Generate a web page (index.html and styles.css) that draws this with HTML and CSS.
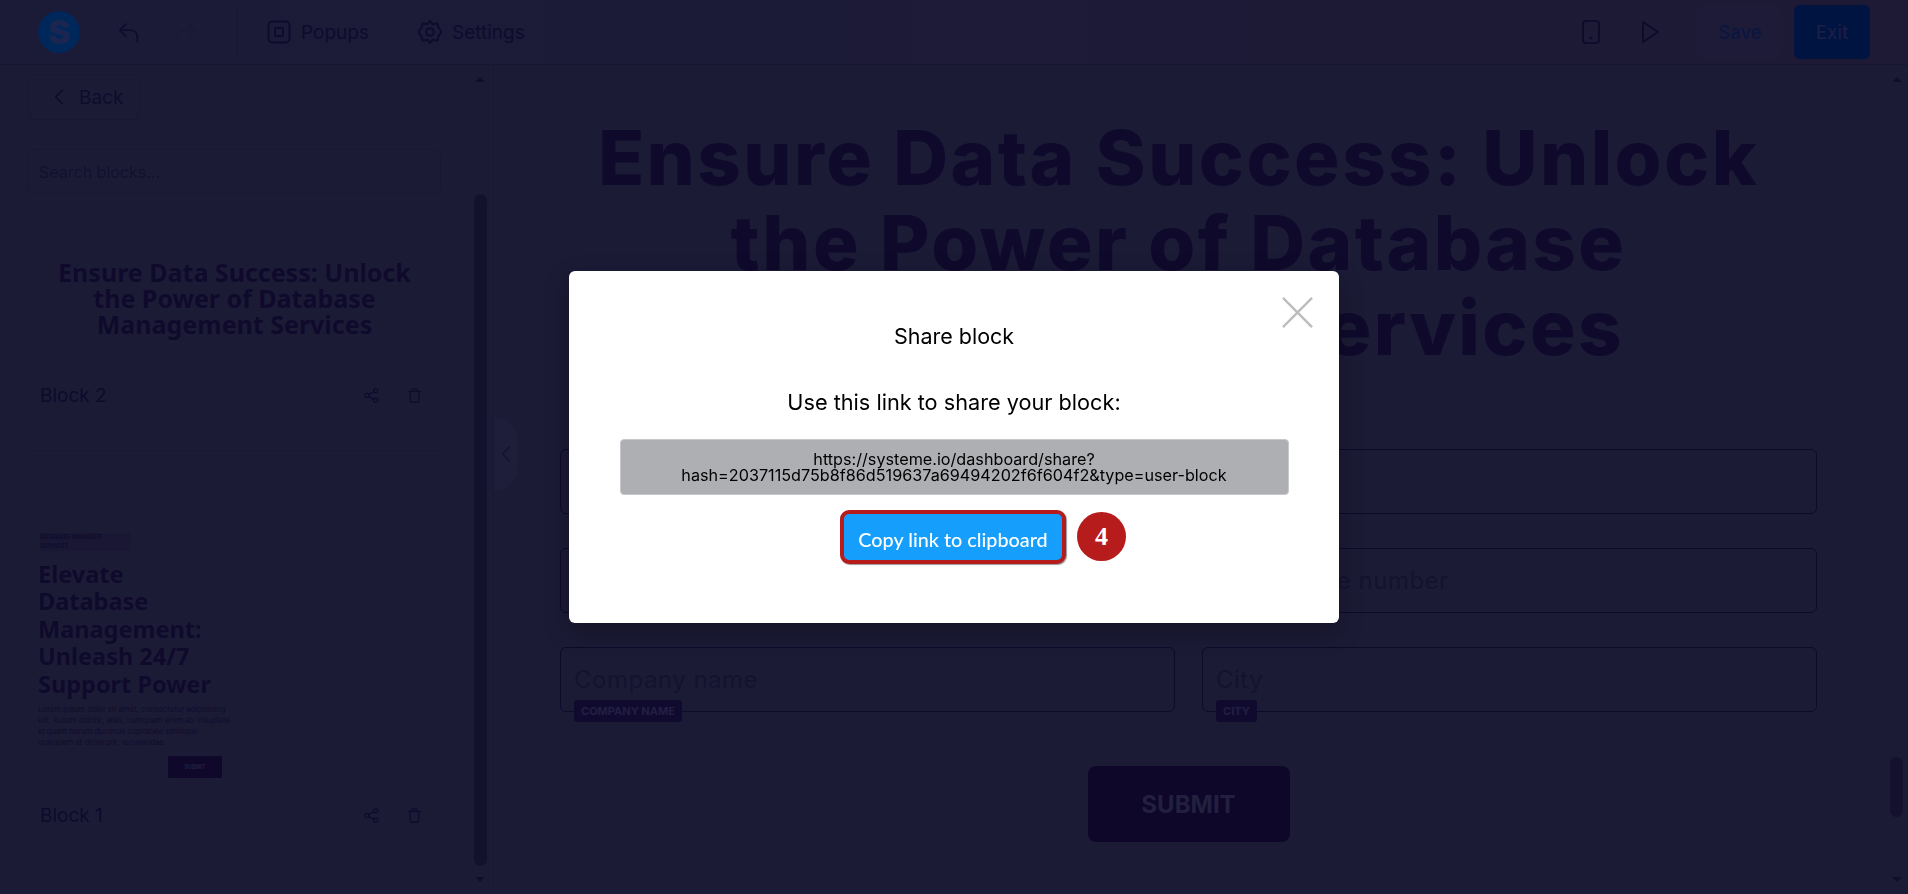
FILE: index.html
```html
<!DOCTYPE html>
<html>
<head>
    <title>Share block</title>
    <link rel="stylesheet" href="styles.css">
</head>
<body>
    <header class="topbar">
        <div class="topbar-left">
            <div class="logo">S</div>
            <svg class="icon undo" viewBox="0 0 24 24"><path d="M9 3 2 10l7 7M2 10h13a7 7 0 0 1 7 7v6"/></svg>
            <svg class="icon redo" viewBox="0 0 24 24"><path d="M15 3l7 7-7 7M22 10H9a7 7 0 0 0-7 7v6"/></svg>
            <div class="separator"></div>
            <div class="nav-item">
                <svg class="icon nav-icon" viewBox="0 0 24 24"><rect x="1.500" y="1.500" width="21" height="21" rx="4"/><rect x="8" y="8" width="8" height="8" rx="1"/></svg>
                <span>Popups</span>
            </div>
            <div class="nav-item">
                <svg class="icon nav-icon" viewBox="0 0 24 24"><path d="M12 1l3 3.200 4.400-.6 1.200 4.300L23.800 12l-3.200 3.900-1.200 4.500-4.400-.6L12 23l-3-3.200-4.400.6-1.200-4.500L.2 12l3.200-4.100 1.200-4.300 4.400.6z"/><circle cx="12" cy="12" r="3.800"/></svg>
                <span>Settings</span>
            </div>
        </div>
        <div class="topbar-right">
            <svg class="icon phone" viewBox="0 0 18 24"><rect x="1" y="1" width="16" height="22" rx="3"/><circle cx="9" cy="18" r=".6"/></svg>
            <svg class="icon play" viewBox="0 0 18 24"><path d="M2 2v20L17 12z"/></svg>
            <div class="btn-save">Save</div>
            <div class="btn-exit">Exit</div>
        </div>
    </header>

    <div class="workspace">
        <aside class="sidebar">
            <div class="back-btn">
                <svg class="icon back-icon" viewBox="0 0 12 20"><path d="M10 2 2 10l8 8"/></svg>
                <span>Back</span>
            </div>
            <div class="search">Search blocks...</div>

            <div class="thumb-title">Ensure Data Success: Unlock the Power of Database Management Services</div>
            <div class="block-row">
                <span>Block 2</span>
                <div class="block-actions">
                    <svg class="icon small-icon" viewBox="0 0 16 16"><circle cx="3" cy="8" r="2.300"/><circle cx="12.500" cy="3" r="2.300"/><circle cx="12.500" cy="13" r="2.300"/><path d="M5 7l5.500-3M5 9l5.500 3"/></svg>
                    <svg class="icon small-icon" viewBox="0 0 16 16"><path d="M1.500 3.500h13M5.500 3.500V1h5v2.500M3 3.500l.8 11.500h8.400l.8-11.500"/></svg>
                </div>
            </div>
            <div class="divider"></div>

            <div class="thumb-tag">DATABASE MANAGED SERVICES</div>
            <div class="thumb-heading">Elevate Database Management: Unleash 24/7 Support Power</div>
            <p class="thumb-text">Lorem ipsum dolor sit amet, consectetur adipisicing elit. Autem dolore, alias, numquam enim ab voluptate id quam harum ducimus cupiditate similique quisquam et deserunt, recusandae.</p>
            <div class="thumb-submit">SUBMIT</div>
            <div class="block-row block-row-last">
                <span>Block 1</span>
                <div class="block-actions">
                    <svg class="icon small-icon" viewBox="0 0 16 16"><circle cx="3" cy="8" r="2.300"/><circle cx="12.500" cy="3" r="2.300"/><circle cx="12.500" cy="13" r="2.300"/><path d="M5 7l5.500-3M5 9l5.500 3"/></svg>
                    <svg class="icon small-icon" viewBox="0 0 16 16"><path d="M1.500 3.500h13M5.500 3.500V1h5v2.500M3 3.500l.8 11.500h8.400l.8-11.500"/></svg>
                </div>
            </div>

            <div class="arrow-up side-up"></div>
            <div class="side-thumb"></div>
            <div class="arrow-down side-down"></div>
        </aside>

        <main class="main">
            <div class="collapse-tab">
                <svg class="icon collapse-icon" viewBox="0 0 10 20"><path d="M9 1 1 10l8 9"/></svg>
            </div>

            <h1 class="headline">Ensure Data Success: Unlock the Power of Database Management Services</h1>

            <div class="form-grid">
                <div class="field"><span>First name</span><b class="field-tag">FIRST NAME</b></div>
                <div class="field"><span>Surname</span><b class="field-tag">SURNAME</b></div>
                <div class="field"><span>Email</span><b class="field-tag">EMAIL</b></div>
                <div class="field"><span>Your phone number</span><b class="field-tag">PHONE</b></div>
                <div class="field"><span>Company name</span><b class="field-tag">COMPANY NAME</b></div>
                <div class="field"><span>City</span><b class="field-tag">CITY</b></div>
            </div>
            <div class="submit-btn">SUBMIT</div>

            <div class="arrow-up main-up"></div>
            <div class="main-thumb"></div>
            <div class="arrow-down main-down"></div>
        </main>
    </div>

    <div class="modal">
        <svg class="modal-close" viewBox="0 0 32 32"><path d="M1 1l30 30M31 1 1 31"/></svg>
        <div class="modal-title">Share block</div>
        <div class="modal-label">Use this link to share your block:</div>
        <div class="modal-link">https://systeme.io/dashboard/share?<br>hash=2037115d75b8f86d519637a69494202f6f604f2&amp;type=user-block</div>
        <div class="copy-wrap">
            <div class="copy-btn">Copy link to clipboard</div>
            <div class="step-badge">4</div>
        </div>
    </div>
</body>
</html>
```

FILE: styles.css
```css
* {
    box-sizing: border-box;
}
html, body {
    height: 100%;
}
body {
    margin: 0;
    overflow: hidden;
    background-color: #1c1b36;
    color: #0f0a2c;
    font-family: Inter, "Liberation Sans", sans-serif;
}
.icon {
    fill: none;
    stroke: #0f0b2d;
    stroke-width: 2;
    stroke-linecap: round;
    stroke-linejoin: round;
    flex-shrink: 0;
}

/* top bar */
.topbar {
    height: 65px;
    display: flex;
    justify-content: space-between;
    align-items: center;
    border-bottom: 1px solid #181731;
    background: linear-gradient(90deg, #1b1b38, #1e1a36);
}
.topbar-left,
.topbar-right {
    display: flex;
    align-items: center;
}
.topbar-left {
    padding-left: 38px;
}
.logo {
    width: 42px;
    height: 42px;
    border-radius: 50%;
    background-color: #00275a;
    color: #1a2550;
    font-weight: 900;
    font-size: 33px;
    line-height: 42px;
    text-align: center;
}
.undo,
.redo {
    width: 21px;
    height: 22px;
    stroke-width: 1.800;
}
.undo {
    margin-left: 38px;
}
.redo {
    margin-left: 37px;
    stroke: #1a1935;
}
.separator {
    width: 1px;
    height: 48px;
    margin-left: 40px;
    background-color: #181731;
}
.nav-item {
    display: flex;
    align-items: center;
    gap: 10px;
    margin-left: 29px;
    font-size: 19px;
    color: #0f0b2d;
}
.nav-item + .nav-item {
    margin-left: 49px;
}
.nav-icon {
    width: 24px;
    height: 24px;
}
.topbar-right {
    padding-right: 38px;
}
.phone {
    width: 18px;
    height: 24px;
}
.play {
    width: 18px;
    height: 24px;
    margin-left: 41px;
}
.btn-save,
.btn-exit {
    height: 54px;
    display: flex;
    align-items: center;
    justify-content: center;
    border-radius: 6px;
    font-size: 18.500px;
    font-weight: 500;
}
.btn-save {
    width: 84px;
    margin-left: 39px;
    color: #0a1640;
    background-color: #1d1b38;
}
.btn-exit {
    width: 76px;
    margin-left: 12px;
    color: #1c1c45;
    background-color: #001441;
}

/* layout */
.workspace {
    display: flex;
    height: calc(100% - 65px);
}
.sidebar {
    position: relative;
    width: 494px;
    flex-shrink: 0;
    padding: 9px 52px 0 28px;
    border-right: 1px solid #191832;
}
.back-btn {
    width: 112px;
    height: 46px;
    display: flex;
    align-items: center;
    gap: 15px;
    padding-left: 25px;
    border: 1px solid #191832;
    border-radius: 6px;
    font-size: 19px;
    color: #0f0b2d;
}
.back-icon {
    width: 10px;
    height: 18px;
}
.search {
    height: 45px;
    margin-top: 29px;
    padding-left: 10px;
    display: flex;
    align-items: center;
    border: 1px solid #191832;
    border-radius: 6px;
    font-size: 16px;
    color: #13102f;
}
.thumb-title {
    margin-top: 66px;
    padding: 0 20px;
    text-align: center;
    font-family: "Noto Sans", sans-serif;
    font-weight: 700;
    font-size: 25px;
    line-height: 25.800px;
}
.block-row {
    height: 24px;
    margin-top: 46.500px;
    padding: 0 12px;
    display: flex;
    align-items: center;
    justify-content: space-between;
    font-size: 19px;
    color: #0d0a2b;
}
.block-row-last {
    margin-top: 26px;
}
.block-actions {
    display: flex;
    gap: 28px;
    margin-right: 7px;
}
.small-icon {
    width: 15px;
    height: 15px;
    stroke-width: 1.300;
}
.divider {
    height: 1px;
    margin-top: 42px;
    background-color: #191832;
}
.thumb-tag {
    width: 90px;
    height: 18px;
    margin: 82px 0 0 12px;
    background-color: #191733;
    font-size: 5.500px;
    font-weight: 600;
    line-height: 9.500px;
    letter-spacing: .2px;
    color: #0f0b2c;
}
.thumb-heading {
    width: 185px;
    margin: 10px 0 0 10px;
    font-family: "Noto Sans", sans-serif;
    font-weight: 700;
    font-size: 23.500px;
    line-height: 27.500px;
}
.thumb-text {
    width: 195px;
    margin: 7px 0 0 10px;
    font-size: 7.700px;
    line-height: 10.800px;
    color: #100c2c;
}
.thumb-submit {
    width: 54px;
    height: 22px;
    margin: 7px 0 0 140px;
    display: flex;
    align-items: center;
    justify-content: center;
    border-radius: 1px;
    background-color: #0f082b;
    font-size: 5.500px;
    font-weight: 700;
    color: #231f42;
}
.side-thumb,
.main-thumb {
    position: absolute;
    border-radius: 7px;
    background-color: #14112f;
}
.side-thumb {
    top: 129px;
    left: 474px;
    width: 13px;
    height: 672px;
}
.arrow-up,
.arrow-down {
    position: absolute;
    width: 0;
    height: 0;
    border-left: 5px solid transparent;
    border-right: 5px solid transparent;
}
.arrow-up {
    border-bottom: 5px solid #110e2d;
}
.arrow-down {
    border-top: 5px solid #110e2d;
}
.side-up {
    top: 12px;
    left: 475px;
}
.side-down {
    top: 812px;
    left: 475px;
}

/* main area */
.main {
    position: relative;
    flex: 1;
    padding: 50px 91px 0 66px;
}
.collapse-tab {
    position: absolute;
    top: 352px;
    left: 0;
    width: 24px;
    height: 74px;
    display: flex;
    align-items: center;
    justify-content: center;
    border-radius: 0 24px 24px 0;
    background-color: #1e1d3a;
}
.collapse-icon {
    width: 8px;
    height: 16px;
    stroke: #100d2e;
    stroke-width: 1.400;
}
.headline {
    margin: 0;
    padding: 0 40px 0 20px;
    text-align: center;
    font-size: 76px;
    font-weight: 800;
    letter-spacing: 2.400px;
    line-height: 85px;
    color: #0f0a2c;
}
.form-grid {
    display: grid;
    grid-template-columns: 1fr 1fr;
    grid-auto-rows: 65px;
    column-gap: 27px;
    row-gap: 34px;
    margin-top: 79px;
}
.field {
    position: relative;
    display: flex;
    align-items: center;
    padding-left: 13px;
    border: 1px solid #0e0a2a;
    border-radius: 6px;
    font-size: 24px;
    letter-spacing: .5px;
    color: #15122f;
}
.field-tag {
    position: absolute;
    top: 52px;
    left: 13px;
    height: 22px;
    padding: 0 7px;
    display: flex;
    align-items: center;
    border-radius: 3px;
    background-color: #100b2e;
    font-size: 11px;
    letter-spacing: 0;
    color: #231f42;
}
.submit-btn {
    width: 202px;
    height: 76px;
    margin: 54px auto 0;
    display: flex;
    align-items: center;
    justify-content: center;
    border-radius: 8px;
    background-color: #0e0729;
    font-size: 24px;
    font-weight: 700;
    color: #23203f;
}
.main-thumb {
    top: 692px;
    right: 5px;
    width: 13px;
    height: 60px;
}
.main-up {
    top: 12px;
    right: 6px;
}
.main-down {
    top: 812px;
    right: 6px;
}

/* share modal */
.modal {
    position: fixed;
    top: 271px;
    left: 569px;
    width: 770px;
    height: 352px;
    padding-top: 53px;
    display: flex;
    flex-direction: column;
    align-items: center;
    border-radius: 6px;
    background-color: #fff;
    box-shadow: 0 8px 24px rgba(0, 0, 0, .3);
    color: #000;
}
.modal-close {
    position: absolute;
    top: 26px;
    right: 26px;
    width: 31px;
    height: 31px;
    fill: none;
    stroke: #bdbdbd;
    stroke-width: 2.500;
}
.modal-title {
    font-size: 21.500px;
    line-height: 24px;
}
.modal-label {
    margin-top: 42px;
    font-size: 21.700px;
    line-height: 24px;
}
.modal-link {
    width: 669px;
    height: 56px;
    margin-top: 25px;
    display: flex;
    flex-direction: column;
    justify-content: center;
    text-align: center;
    border: 1px solid #c8c8cc;
    border-radius: 4px;
    background-color: #aeafb3;
    font-size: 16.200px;
    line-height: 16px;
    color: #000;
}
.copy-wrap {
    position: relative;
    margin: 15px 2px 0 0;
}
.copy-btn {
    width: 226px;
    height: 54px;
    padding-top: 3px;
    display: flex;
    align-items: center;
    justify-content: center;
    border: 4px solid #b71c1c;
    border-radius: 9px;
    background-color: #169efd;
    box-shadow: 1px 1px 1px rgba(0, 0, 0, .4);
    font-family: Lato, sans-serif;
    font-size: 19.800px;
    font-weight: 500;
    color: #fff;
}
.step-badge {
    position: absolute;
    top: 2px;
    left: 237px;
    width: 49px;
    height: 49px;
    display: flex;
    align-items: center;
    justify-content: center;
    border-radius: 50%;
    background-color: #b71c1c;
    font-family: "Liberation Serif", serif;
    font-size: 26px;
    font-weight: 700;
    color: #fff;
}
```
